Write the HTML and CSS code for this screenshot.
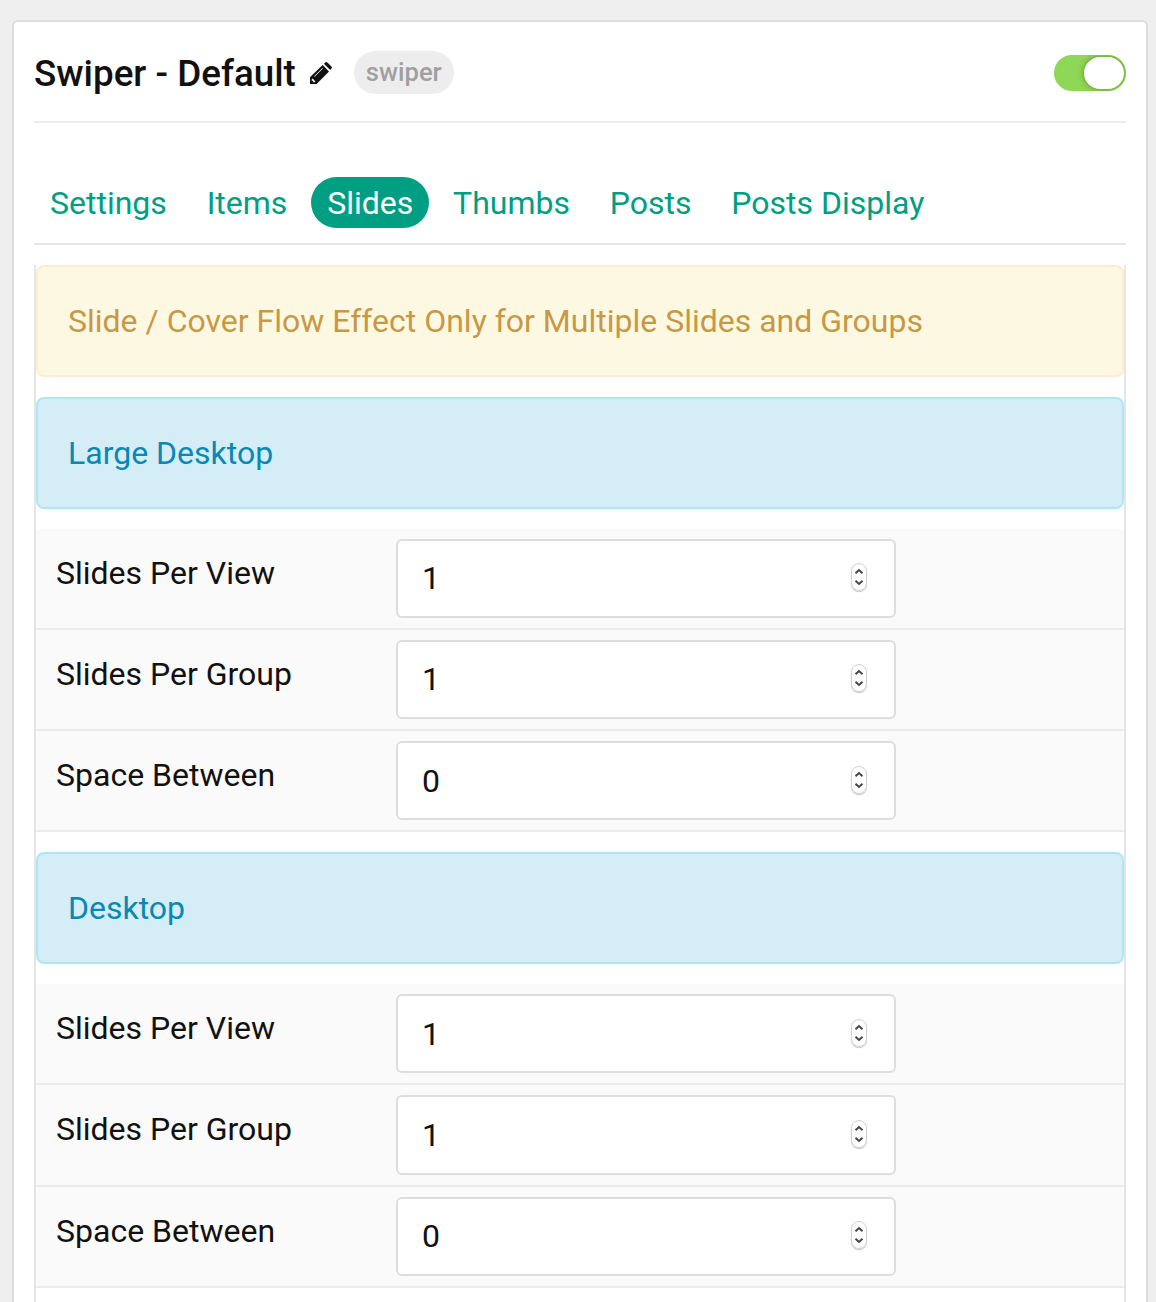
FILE: index.html
```html
<!DOCTYPE html>
<html lang="en">
<head>
<meta charset="utf-8">
<title>Swiper - Default</title>
<link rel="stylesheet" href="styles.css">
</head>
<body>
<svg class="sprite" width="0" height="0" aria-hidden="true">
  <symbol id="stepper" viewBox="1 1 14 26">
    <path d="M4.5 10.3 8 7.1l3.5 3.2M4.5 17.7 8 20.9l3.5-3.2" fill="none" stroke="#444" stroke-width="1.9"/>
  </symbol>
</svg>
<main class="card">
  <header class="card-header">
    <h1 class="title">Swiper - Default</h1>
    <svg class="pencil" viewBox="0 0 22 22" aria-hidden="true">
      <path fill="#111" fill-rule="evenodd" d="M0 22V15.2L12.6 2.9 19 9.4 6.6 22ZM1.7 17.4V18.8H3.2V20.3H4.5L5.4 19.4 2.6 16.5ZM4.7 14.7 12.9 6.6 12.4 6.1 4.2 14.2Z"/>
      <path fill="#111" d="M14 1.7 15.2.5Q16.3-.5 17.4.5L21.4 4.4Q22.5 5.5 21.4 6.6L20.2 7.9Z"/>
    </svg>
    <span class="badge">swiper</span>
    <button class="toggle" type="button" role="switch" aria-checked="true" aria-label="Enabled"><span class="knob"></span></button>
  </header>
  <nav class="tabs">
    <a class="tab">Settings</a>
    <a class="tab">Items</a>
    <a class="tab active">Slides</a>
    <a class="tab">Thumbs</a>
    <a class="tab">Posts</a>
    <a class="tab">Posts Display</a>
  </nav>
  <section class="panel">
    <div class="alert warning">Slide / Cover Flow Effect Only for Multiple Slides and Groups</div>
    <div class="alert info">Large Desktop</div>
    <div class="fields">
      <div class="row"><label class="label" for="a1">Slides Per View</label><div class="number"><input id="a1" class="value" value="1"><svg class="stepper"><use href="#stepper"/></svg></div></div>
      <div class="row"><label class="label" for="a2">Slides Per Group</label><div class="number"><input id="a2" class="value" value="1"><svg class="stepper"><use href="#stepper"/></svg></div></div>
      <div class="row"><label class="label" for="a3">Space Between</label><div class="number"><input id="a3" class="value" value="0"><svg class="stepper"><use href="#stepper"/></svg></div></div>
    </div>
    <div class="alert info">Desktop</div>
    <div class="fields">
      <div class="row"><label class="label" for="b1">Slides Per View</label><div class="number"><input id="b1" class="value" value="1"><svg class="stepper"><use href="#stepper"/></svg></div></div>
      <div class="row"><label class="label" for="b2">Slides Per Group</label><div class="number"><input id="b2" class="value" value="1"><svg class="stepper"><use href="#stepper"/></svg></div></div>
      <div class="row"><label class="label" for="b3">Space Between</label><div class="number"><input id="b3" class="value" value="0"><svg class="stepper"><use href="#stepper"/></svg></div></div>
    </div>
  </section>
</main>
</body>
</html>
```
FILE: styles.css
```css
* { box-sizing: border-box; }

body {
  margin: 0;
  height: 1302px;
  padding: 20px 8px 0 12px;
  background: #efefef;
  color: #111;
  font: 400 32px/51px Roboto, sans-serif;
}

.sprite { display: block; width: 0; height: 0; }

.card {
  display: flex;
  flex-direction: column;
  height: 1282px;
  padding: 0 20px;
  background: #fff;
  border: 2px solid #ddd;
  border-bottom: 0;
  border-radius: 6px 6px 0 0;
}

.card-header {
  display: flex;
  flex: none;
  align-items: center;
  height: 101px;
  border-bottom: 2px solid #ececec;
}

.title {
  margin: 4px 0 0;
  font-size: 36.8px;
  font-weight: 500;
  line-height: 48px;
  white-space: nowrap;
}

.pencil {
  width: 22px;
  height: 22px;
  margin: 3px 0 0 14px;
}

.badge {
  height: 43px;
  margin: 2px 0 0 22px;
  padding: 0 12px;
  border-radius: 22px;
  background: #ededed;
  color: #a0a0a0;
  font-size: 25.6px;
  font-weight: 500;
  line-height: 43px;
}

.toggle {
  display: flex;
  justify-content: flex-end;
  width: 72px;
  height: 36px;
  margin: 2px 0 0 auto;
  padding: 2px;
  border: 0;
  border-radius: 18px;
  background: #8fd756;
  overflow: hidden;
}

.knob {
  width: 40px;
  height: 32px;
  border-radius: 16px;
  background: #fff;
  box-shadow: 0 0 5px 1px rgba(70, 110, 20, .5);
}

.tabs {
  display: flex;
  flex: none;
  gap: 7.8px;
  height: 122px;
  padding-top: 54px;
  border-bottom: 2px solid #e5e5e5;
  color: #009e82;
}

.tab {
  height: 51px;
  padding: 1px 16px 0;
  border-radius: 26px;
  white-space: nowrap;
}

.active { background: #009e82; color: #fff; }

.panel {
  flex: 1;
  margin-top: 20px;
  border: solid #e5e5e5;
  border-width: 0 2px;
}

.alert {
  height: 112px;
  margin-bottom: 20px;
  padding: 29px 30px 0;
  border: 2px solid;
  border-radius: 8px;
}

.warning { background: #fdf8e2; border-color: #fdedd0; color: #c89844; }

.info { background: #d4edf7; border-color: #ade8f2; color: #0888b4; }

.fields + .alert { margin-top: 20px; }

.row {
  display: flex;
  height: 101.11px;
  padding: 10px 20px 0;
  background: #fafafa;
  border-bottom: 2px solid #ececec;
}

.label { width: 340px; padding-top: 9px; }

.number {
  display: flex;
  align-items: center;
  width: 500px;
  height: 79.1px;
  padding: 0 27px 0 24px;
  background: #fff;
  border: 2px solid #ddd;
  border-radius: 6px;
}

.value {
  flex: 1;
  min-width: 0;
  height: 75px;
  margin-top: -.4px;
  padding: 0;
  border: 0;
  outline: 0;
  background: none;
  color: #111;
  font: inherit;
}

.stepper {
  width: 16px;
  height: 28px;
  margin-top: -2.4px;
  border: 1px solid #d2d2d2;
  border-radius: 8px;
  box-shadow: 0 1px 1px rgba(0, 0, 0, .25);
}
```
